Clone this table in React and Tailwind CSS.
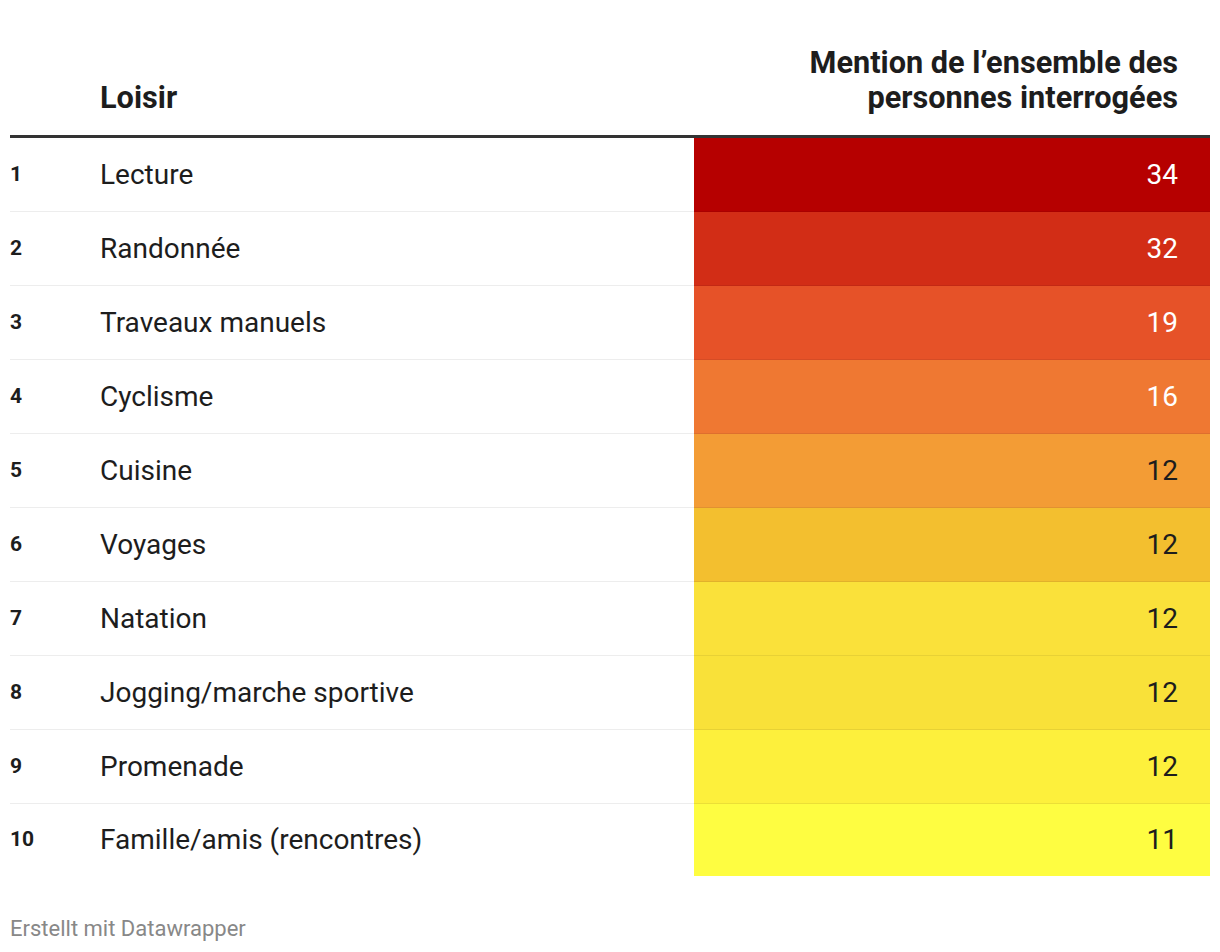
import React from "react";

const rows = [
  { n: 1, name: "Lecture", v: 34, bg: "bg-[#b60000]", light: true },
  { n: 2, name: "Randonnée", v: 32, bg: "bg-[#d22d16]", light: true },
  { n: 3, name: "Traveaux manuels", v: 19, bg: "bg-[#e65228]", light: true },
  { n: 4, name: "Cyclisme", v: 16, bg: "bg-[#ef7832]", light: true },
  { n: 5, name: "Cuisine", v: 12, bg: "bg-[#f39c35]", light: false },
  { n: 6, name: "Voyages", v: 12, bg: "bg-[#f3bf2f]", light: false },
  { n: 7, name: "Natation", v: 12, bg: "bg-[#fae13a]", light: false },
  { n: 8, name: "Jogging/marche sportive", v: 12, bg: "bg-[#f9e139]", light: false },
  { n: 9, name: "Promenade", v: 12, bg: "bg-[#fdf03c]", light: false },
  { n: 10, name: "Famille/amis (rencontres)", v: 11, bg: "bg-[#fefd41]", light: false },
];

export default function App() {
  return (
    <div className="w-[1220px] h-[952px] bg-white px-[10px] pt-[45px] text-[#1d1d1d] font-['Roboto',sans-serif]">
      <div className="grid grid-cols-[90px_594px_516px] border-b-[3px] border-[#333333]">
        <div />
        <div className="flex items-end pb-[20px] text-[30.7px] font-bold leading-[35px]">Loisir</div>
        <div className="pr-[32px] pb-[20px] text-right text-[30.7px] font-bold leading-[35px]">
          Mention de l’ensemble des
          <br />
          personnes interrogées
        </div>
      </div>
      {rows.map((r, i) => {
        const last = i === rows.length - 1;
        const cell = last ? "h-[72px]" : "h-[74px] border-b border-[#00000012]";
        return (
          <div key={r.n} className="grid grid-cols-[90px_594px_516px]">
            <div className={"flex items-center text-[21px] font-bold " + cell}>{r.n}</div>
            <div className={"flex items-center text-[28px] " + cell}>{r.name}</div>
            <div
              className={
                "flex items-center justify-end pr-[32px] text-[28px] " +
                cell +
                " " +
                r.bg +
                (r.light ? " text-white" : " text-[#1d1d1d]")
              }
            >
              {r.v}
            </div>
          </div>
        );
      })}
      <div className="pt-[40px] text-[22px] leading-[26px] text-[#888888]">Erstellt mit Datawrapper</div>
    </div>
  );
}
